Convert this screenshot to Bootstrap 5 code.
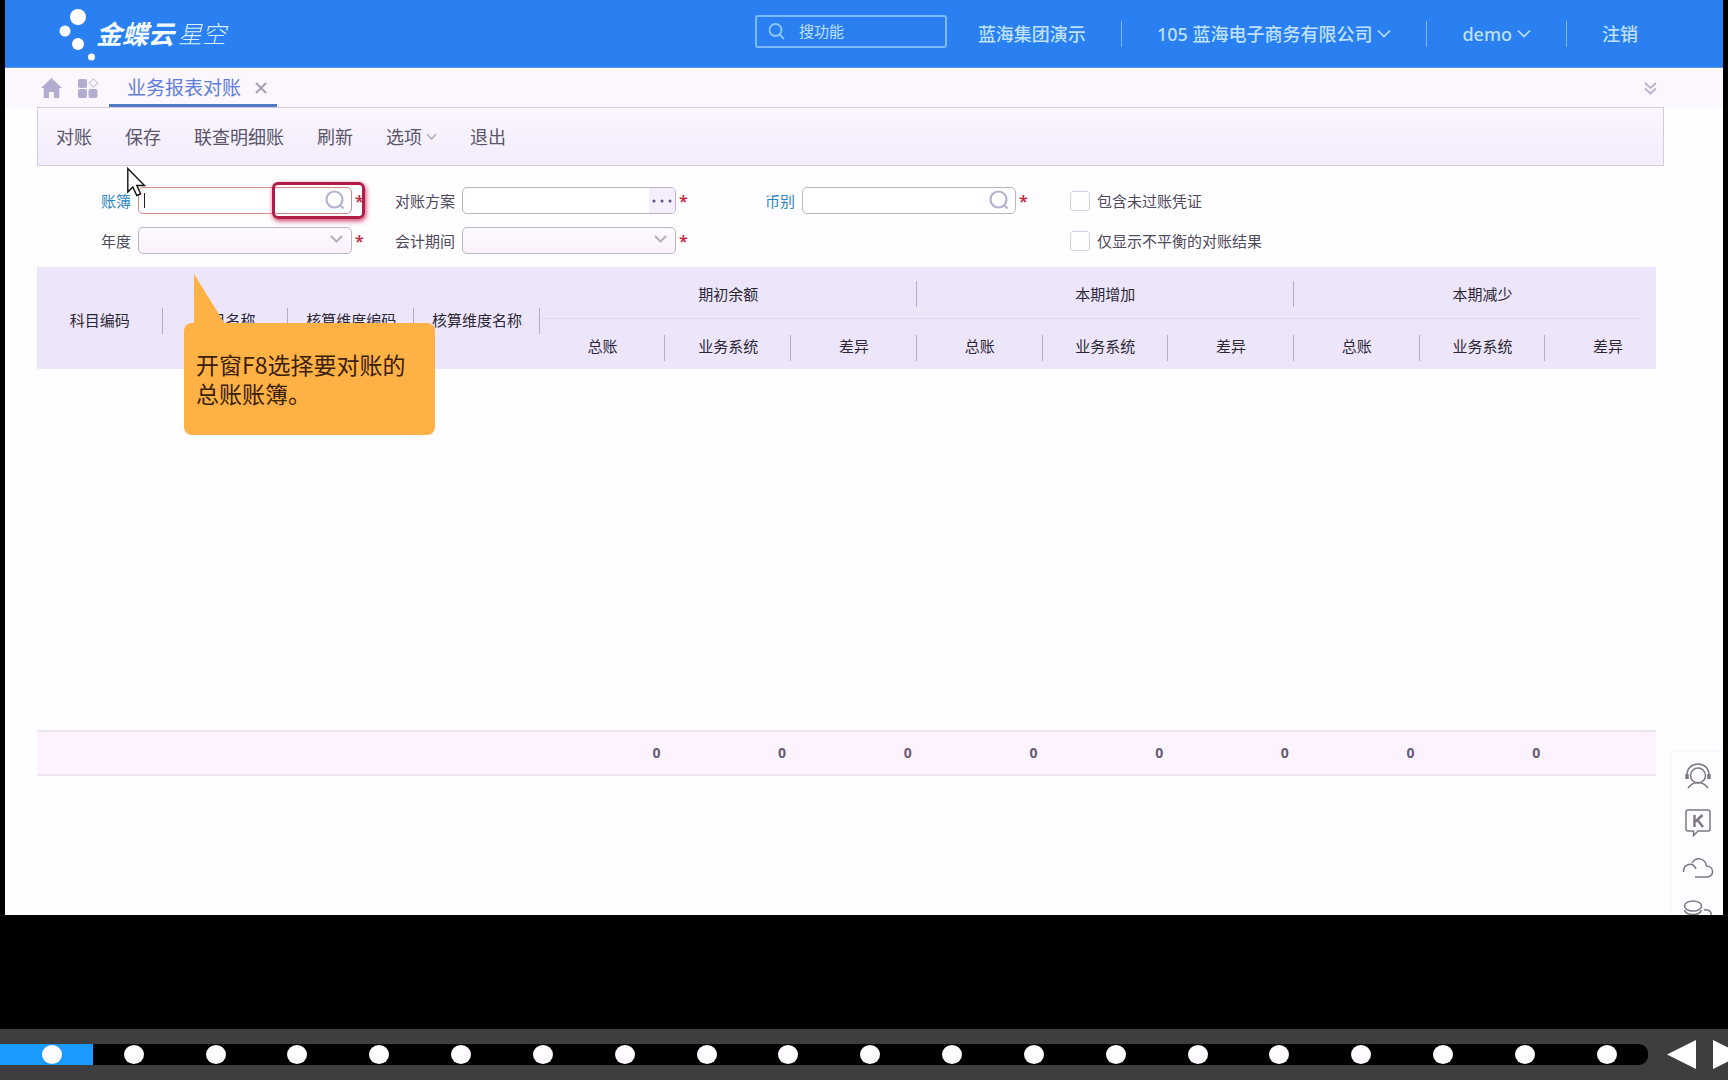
<!DOCTYPE html>
<html lang="zh-CN">
<head>
<meta charset="utf-8">
<meta name="viewport" content="width=device-width, initial-scale=1">
<title>业务报表对账</title>
<link href="https://cdn.jsdelivr.net/npm/bootstrap@5.3.0/dist/css/bootstrap.min.css" rel="stylesheet">
<style>
  body { background: #000; color: #4f4a5c; font-family: "Noto Sans", "Noto Sans CJK SC", sans-serif; font-size: 15px; line-height: 20px; overflow: hidden; }
  button { font-family: inherit; }
  svg { display: block; flex: none; }
  .app-frame { background: #fefdff; margin: 0 5px 114px; overflow: hidden; }

  /* header */
  .top-bar { background: #2a80f0; height: 68px; padding: 0 85px 0 54px; border-bottom: 1px solid #5f95e0; color: #bfe0ff; font-size: 18px; font-weight: 500; }
  .top-bar a { color: inherit; text-decoration: none; }
  .brand-main { font-size: 26px; font-weight: 700; font-style: italic; color: #f2fbff; line-height: 36px; }
  .brand-sub { font-size: 24px; font-weight: 300; font-style: italic; color: #d9efff; line-height: 36px; }
  .brand-text { gap: 4px; }
  .finder { width: 192px; height: 33px; margin-top: -5px; margin-right: 31px; padding: 0 11px; gap: 14px; border: 2px solid #7db9fa; border-radius: 3px; }
  .finder input { min-width: 0; width: 100%; padding: 0; background: none; border: 0; outline: 0; color: #bfe0ff; font-size: 15px; font-weight: 400; }
  .finder input::placeholder { color: #bfe0ff; opacity: 1; }
  .bar-line { width: 1px; height: 26px; margin: 0 35px; background: #7db5f8; }
  .bar-item { gap: 5px; }

  /* tabs */
  .tab-strip { background: #fcf6ff; border-top: 2px solid #fffdff; height: 39px; padding: 0 66px 0 36px; }
  .tab-open { height: 37px; margin-left: 11px; padding: 2px 10px 0 18px; gap: 14px; border-bottom: 3px solid #5279c6; color: #5f80d6; font-size: 19px; }
  .icon-btn { padding: 0; border: 0; background: none; }

  /* toolbar */
  .tool-strip { margin: 0 59px 0 32px; height: 59px; padding: 0 18px; gap: 33px; border: 1px solid #d3ccda; background: linear-gradient(#fcf6ff, #f2ecfd); }
  .tool-strip button { padding: 0; border: 0; background: none; color: #5a5568; font-size: 18px; line-height: 24px; gap: 4px; }

  /* filter form */
  .main-pane { margin: 0 67px 0 32px; }
  .filters { display: grid; grid-template-columns: 294fr 370fr 305fr 586fr; row-gap: 13px; padding: 21px 0 13px 64px; }
  .filters label { white-space: nowrap; }
  .linked { color: #2a86bd; }
  .field-line { gap: 7px; }
  .box-wrap { width: 214px; height: 27px; }
  .box-wrap input, .box-wrap select { width: 100%; height: 100%; padding: 0 8px; border: 1px solid #b9b5c3; border-radius: 5px; background: #fff; color: #333; appearance: none; outline: 0; }
  .box-wrap select { background: linear-gradient(#fdfaff, #faf2fd); }
  .box-wrap .box-active { border-color: #d98a86; }
  .box-icon { position: absolute; right: 7px; top: 3px; pointer-events: none; }
  .dots-btn { position: absolute; right: 1px; top: 1px; width: 26px; height: 25px; padding: 0; border: 0; border-radius: 0 4px 4px 0; background: #f5effd; }
  .caret { position: absolute; left: 6px; top: 6px; width: 1px; height: 15px; background: #222; }
  .must { color: #c4283c; font-size: 16px; font-weight: 600; width: 9px; margin-left: -4px; }
  .hot-area { position: absolute; left: 134px; top: -5px; width: 93px; height: 37px; border: 3px solid #b01e48; border-radius: 6px; box-shadow: 1px 2px 5px #d0406a; pointer-events: none; }
  .tick { width: 20px; height: 20px; margin: 0; border: 1px solid #d6cfe2; border-radius: 3px; appearance: none; background: #fff; }

  /* grid */
  .grid-clip { overflow: hidden; }
  .report-grid { width: calc(100% + 15px); table-layout: fixed; text-align: center; }
  .report-grid th { --sep: linear-gradient(#b4adc4, #b4adc4); padding: 4px 0 0; height: 50px; background: #ede6fa var(--sep) right 16px / 1px 26px no-repeat; color: #2c2735; font-weight: 400; white-space: nowrap; }
  .report-grid th[rowspan] { background-position: right 41px; }
  .report-grid th.group-head, .report-grid th.group-last { height: 52px; padding-top: 2px; }
  .report-grid th.group-head { background: linear-gradient(#e2daf0, #e2daf0) left bottom / 100% 1px no-repeat, var(--sep) right 14px / 1px 26px no-repeat, #ede6fa; }
  .report-grid th.group-last { background: linear-gradient(#e2daf0, #e2daf0) left bottom / 92% 1px no-repeat, #ede6fa; }
  .report-grid th.col-last { background-image: none; }
  .blank-rows { height: 362px; padding: 0; }
  .report-grid tfoot td { height: 44px; padding: 0 5px; border-top: 2px solid #eee3f0; border-bottom: 2px solid #eee3f0; background: #fcf3fe; text-align: right; color: #665d74; font-family: "Open Sans", sans-serif; font-weight: 700; font-size: 14px; }

  /* overlays */
  .callout { position: absolute; left: 179px; top: 323px; width: 251px; height: 112px; padding: 27px 12px; border-radius: 8px; background: #feb144; color: #3a200d; font-family: "Noto Sans CJK SC", sans-serif; font-size: 23px; line-height: 29px; font-weight: 400; }
  .callout svg { position: absolute; left: 10px; top: -49px; }
  .pointer { position: absolute; left: 122px; top: 167px; }
  .side-rail { position: absolute; right: 0; bottom: 0; width: 51px; height: 163px; padding-top: 10px; background: #fefdff; box-shadow: 0 0 4px #f3e8f8; gap: 18px; overflow: hidden; }

  /* player */
  .player { height: 51px; background: #3e3d40; gap: 19px; }
  .track { height: 21px; padding: 0 31px 1px 42px; border-radius: 0 9px 9px 0; background: linear-gradient(#1b9aff, #1b9aff) left / 93px 100% no-repeat, #000; }
  .track button { width: 20px; height: 19px; padding: 0; border: 0; border-radius: 50%; background: #fffcff; }
  .player-nav { gap: 17px; width: 61px; overflow: hidden; }
</style>
<script src="https://cdn.jsdelivr.net/npm/bootstrap@5.3.0/dist/js/bootstrap.bundle.min.js"></script>
</head>
<body class="d-flex flex-column vh-100">
<div class="app-frame flex-grow-1 position-relative">
  <header class="top-bar d-flex align-items-center">
    <a href="#" class="d-flex align-items-center me-auto">
      <svg width="37" height="56" viewBox="0 0 37 56" fill="#fff"><circle cx="19" cy="11" r="8"/><circle cx="6" cy="25" r="5.500"/><circle cx="19" cy="38" r="6"/><circle cx="32.500" cy="51" r="3.500"/></svg>
      <span class="brand-text d-flex"><span class="brand-main">金蝶云</span><span class="brand-sub">星空</span></span>
    </a>
    <div class="finder d-flex align-items-center">
      <svg width="17" height="17" viewBox="0 0 17 17" fill="none" stroke="#8cc4fb" stroke-width="1.800"><circle cx="7.500" cy="7" r="6"/><path d="M11.500 11.500l4.500 4.500"/></svg>
      <input type="text" placeholder="搜功能" aria-label="搜功能">
    </div>
    <a href="#">蓝海集团演示</a>
    <span class="bar-line"></span>
    <a href="#" class="bar-item d-flex align-items-center">105 蓝海电子商务有限公司
      <svg width="14" height="9" viewBox="0 0 14 9" fill="none" stroke="currentColor" stroke-width="1.600"><path d="M1 1.500l6 6 6-6"/></svg></a>
    <span class="bar-line"></span>
    <a href="#" class="bar-item d-flex align-items-center">demo
      <svg width="14" height="9" viewBox="0 0 14 9" fill="none" stroke="currentColor" stroke-width="1.600"><path d="M1 1.500l6 6 6-6"/></svg></a>
    <span class="bar-line"></span>
    <a href="#">注销</a>
  </header>

  <nav class="tab-strip d-flex align-items-center">
    <button class="icon-btn" aria-label="首页"><svg width="21" height="22" viewBox="0 0 21 22" fill="#b2acd0"><path d="M10.500 0L21 10h-2.700v10h-5.300v-6h-5v6H2.700V10H0z"/></svg></button>
    <button class="icon-btn ms-3" aria-label="应用"><svg width="20" height="22" viewBox="0 0 20 22" fill="#b2acd0"><rect y="1" width="9" height="9" rx="2"/><rect y="11" width="9" height="9" rx="2"/><rect x="10.500" y="11" width="9" height="9" rx="2"/><path d="M15.500.8l4.200 4.200-4.200 4.200-4.200-4.200z" fill="none" stroke="#b2acd0"/></svg></button>
    <div class="tab-open d-flex align-items-center">
      <span>业务报表对账</span>
      <button class="icon-btn" aria-label="关闭"><svg width="12" height="12" viewBox="0 0 12 12" stroke="#a39db6" stroke-width="1.800"><path d="M1 1l10 10M11 1L1 11"/></svg></button>
    </div>
    <button class="icon-btn ms-auto" aria-label="展开"><svg width="13" height="13" viewBox="0 0 13 13" fill="none" stroke="#b9b2cf" stroke-width="1.800"><path d="M1 1l5.500 5L12 1M1 6.500l5.500 5 5.500-5"/></svg></button>
  </nav>

  <div class="tool-strip d-flex align-items-center">
    <button>对账</button><button>保存</button><button>联查明细账</button><button>刷新</button>
    <button class="d-flex align-items-center">选项<svg width="11" height="8" viewBox="0 0 12 8" fill="none" stroke="#b5afc0" stroke-width="1.800"><path d="M1 1l5 5 5-5"/></svg></button>
    <button>退出</button>
  </div>

  <main class="main-pane">
    <form class="filters">
      <div class="field-line d-flex align-items-center">
        <label class="linked" for="f-book">账簿</label>
        <div class="box-wrap position-relative">
          <input id="f-book" class="box-active" type="text"><span class="caret"></span>
          <svg class="box-icon" width="20" height="20" viewBox="0 0 20 20" fill="none" stroke="#b3b2d0" stroke-width="2.200"><circle cx="9.500" cy="9.500" r="8"/><path d="M14.500 14.500l4 4"/></svg>
          <span class="hot-area"></span>
        </div><span class="must">*</span>
      </div>
      <div class="field-line d-flex align-items-center">
        <label for="f-plan">对账方案</label>
        <div class="box-wrap position-relative">
          <input id="f-plan" type="text">
          <button type="button" class="dots-btn" aria-label="更多"><svg width="26" height="25" viewBox="0 0 26 25" fill="#5d4f83"><circle cx="5" cy="13" r="1.500"/><circle cx="13" cy="13" r="1.500"/><circle cx="21" cy="13" r="1.500"/></svg></button>
        </div><span class="must">*</span>
      </div>
      <div class="field-line d-flex align-items-center">
        <label class="linked" for="f-cur">币别</label>
        <div class="box-wrap position-relative">
          <input id="f-cur" type="text">
          <svg class="box-icon" width="20" height="20" viewBox="0 0 20 20" fill="none" stroke="#b3b2d0" stroke-width="2.200"><circle cx="9.500" cy="9.500" r="8"/><path d="M14.500 14.500l4 4"/></svg>
        </div><span class="must">*</span>
      </div>
      <div class="field-line d-flex align-items-center">
        <input class="tick" type="checkbox" id="c-unposted"><label for="c-unposted">包含未过账凭证</label>
      </div>
      <div class="field-line d-flex align-items-center">
        <label for="f-year">年度</label>
        <div class="box-wrap position-relative">
          <select id="f-year"><option></option></select>
          <svg class="box-icon" width="16" height="18" viewBox="0 0 16 18" fill="none" stroke="#b5b0bd" stroke-width="2"><path d="M2 6l5.500 5.500L13 6"/></svg>
        </div><span class="must">*</span>
      </div>
      <div class="field-line d-flex align-items-center">
        <label for="f-period">会计期间</label>
        <div class="box-wrap position-relative">
          <select id="f-period"><option></option></select>
          <svg class="box-icon" width="16" height="18" viewBox="0 0 16 18" fill="none" stroke="#b5b0bd" stroke-width="2"><path d="M2 6l5.500 5.500L13 6"/></svg>
        </div><span class="must">*</span>
      </div>
      <div></div>
      <div class="field-line d-flex align-items-center">
        <input class="tick" type="checkbox" id="c-diff"><label for="c-diff">仅显示不平衡的对账结果</label>
      </div>
    </form>

    <div class="grid-clip">
      <table class="report-grid">
        <thead>
          <tr><th rowspan="2">科目编码</th><th rowspan="2">科目名称</th><th rowspan="2">核算维度编码</th><th rowspan="2">核算维度名称</th>
            <th colspan="3" class="group-head">期初余额</th><th colspan="3" class="group-head">本期增加</th><th colspan="3" class="group-last">本期减少</th></tr>
          <tr><th>总账</th><th>业务系统</th><th>差异</th><th>总账</th><th>业务系统</th><th>差异</th><th>总账</th><th>业务系统</th><th class="col-last">差异</th></tr>
        </thead>
        <tbody><tr><td colspan="13" class="blank-rows"></td></tr></tbody>
        <tfoot><tr><td colspan="4"></td><td>0</td><td>0</td><td>0</td><td>0</td><td>0</td><td>0</td><td>0</td><td>0</td><td></td></tr></tfoot>
      </table>
    </div>
  </main>

  <div class="callout">
    <svg width="31" height="50" viewBox="0 0 31 50" fill="#feb144"><path d="M0 0L31 50H0z"/></svg>
    开窗F8选择要对账的<br>总账账簿。
  </div>
  <svg class="pointer" width="20" height="30" viewBox="0 0 20 30"><path d="M.8 1.500v23.500l5-5 4 8.500 3.800-1.700L9.800 18.500h7.700z" fill="#fff" stroke="#111" stroke-width="1.400"/></svg>

  <aside class="side-rail d-flex flex-column align-items-center">
    <button class="icon-btn" aria-label="客服"><svg width="28" height="28" viewBox="0 0 28 28" fill="none" stroke="#7d7584" stroke-width="1.500"><circle cx="14" cy="13.500" r="7.500"/><path d="M3 13C3 6 8 2 14 2s11 4 11 11M4 26c3-4 6-5.500 10-5.500S21 22 24 26"/><path d="M3 12v5M25 12v5" stroke-width="3.500"/></svg></button>
    <button class="icon-btn" aria-label="社区"><svg width="28" height="29" viewBox="0 0 28 29" fill="none" stroke="#7d7584" stroke-width="1.500"><path d="M4 2h20q2 0 2 2v17q0 2-2 2H14l-4.500 4.500V23H4q-2 0-2-2V4q0-2 2-2z"/><path d="M10.500 7v12M18.500 7L11.500 13.500M13.500 12l5.500 7" stroke-width="2.400"/></svg></button>
    <button class="icon-btn" aria-label="云服务"><svg width="32" height="26" viewBox="0 0 32 26" fill="none" stroke="#7d7584" stroke-width="1.500"><path d="M1.500 17C1.500 8 11 7 14 14M10 8C14 1 23 3 24.500 11c8 0 8 11 .5 11H13"/></svg></button>
    <button class="icon-btn" aria-label="数据"><svg width="30" height="28" viewBox="0 0 30 28" fill="none" stroke="#7d7584" stroke-width="1.500"><ellipse cx="10" cy="7" rx="8.500" ry="5"/><path d="M1.500 11c2 6 15 6 17 0M1.500 17c2 6 15 6 17 0M21 11c5-1 8 2 7 6"/></svg></button>
  </aside>
</div>

<div class="player d-flex align-items-center flex-shrink-0">
  <div class="track flex-grow-1 d-flex align-items-center justify-content-between">
    <button aria-label="1"></button><button aria-label="2"></button><button aria-label="3"></button><button aria-label="4"></button><button aria-label="5"></button>
    <button aria-label="6"></button><button aria-label="7"></button><button aria-label="8"></button><button aria-label="9"></button><button aria-label="10"></button>
    <button aria-label="11"></button><button aria-label="12"></button><button aria-label="13"></button><button aria-label="14"></button><button aria-label="15"></button>
    <button aria-label="16"></button><button aria-label="17"></button><button aria-label="18"></button><button aria-label="19"></button><button aria-label="20"></button>
  </div>
  <div class="player-nav d-flex">
    <button class="icon-btn" aria-label="上一步"><svg width="29" height="29" viewBox="0 0 29 29" fill="#fff"><path d="M29 0v29L0 14.500z"/></svg></button>
    <button class="icon-btn" aria-label="下一步"><svg width="29" height="29" viewBox="0 0 29 29" fill="#fff"><path d="M0 0v29l29-14.500z"/></svg></button>
  </div>
</div>
</body>
</html>
